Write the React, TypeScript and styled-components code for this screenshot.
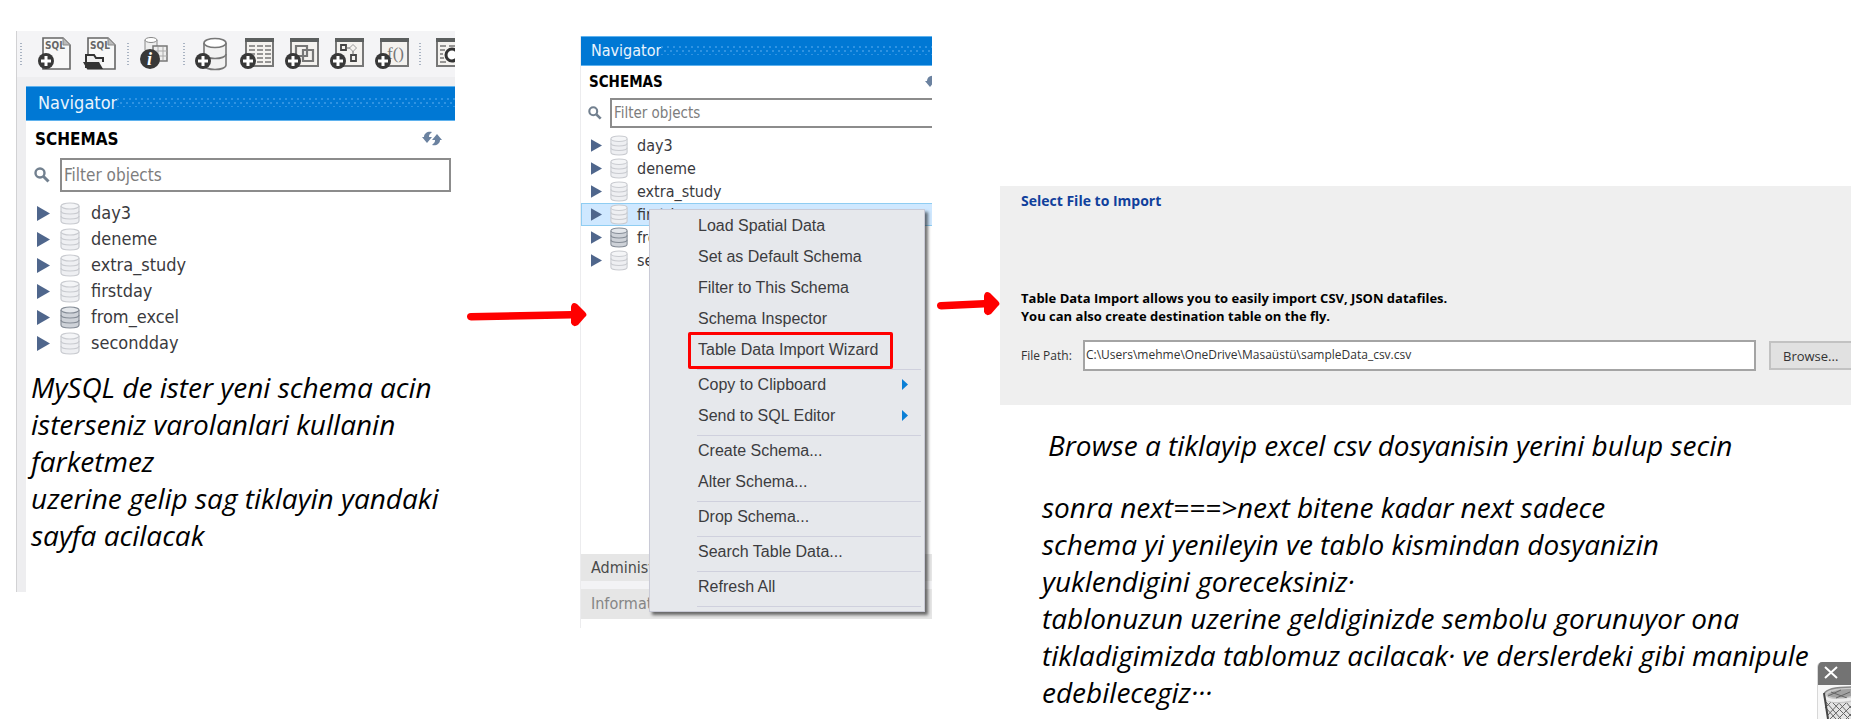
import React from "react";
import styled, { createGlobalStyle, css } from "styled-components";

const uiFont = `"DejaVu Sans Condensed", "Noto Sans", sans-serif`;

const GlobalStyle = createGlobalStyle`
  *, *::before, *::after { box-sizing: border-box; }
  body { margin: 0; background: #fff; color: #000; font-family: ${uiFont}; }
  button, input { font: inherit; color: inherit; border-radius: 0; }
  button { background: none; border: 0; padding: 0; margin: 0; text-align: left; }
  p, h1, h2, ul { margin: 0; padding: 0; }
  ul { list-style: none; }
  svg { display: block; flex: none; }
`;

/* ---------- board ---------- */

const Board = styled.main`
  position: relative;
  display: grid;
  grid-template-columns: 439px 125px 352px 68px minmax(600px, 1fr);
  align-items: start;
  min-height: 100vh;
  padding-left: 16px;
  overflow: hidden;
`;

const Step = styled.section<{ $top: number }>`
  min-width: 0;
  padding-top: ${(p) => p.$top}px;
`;

const ArrowCell = styled.div<{ $top: number; $left: number }>`
  position: relative;
  z-index: 2;
  padding: ${(p) => `${p.$top}px 0 0 ${p.$left}px`};
  svg { overflow: visible; }
`;

const Note = styled.p`
  font-family: "Open Sans", "Noto Sans", sans-serif;
  font-style: italic;
  font-size: 28px;
  line-height: 37px;
  font-variant-ligatures: none;
  white-space: nowrap;
`;

/* ---------- workbench panel ---------- */

const Workbench = styled.div`
  min-height: 561px;
  border-left: 1px solid #d2d2d4;
  background: linear-gradient(to right, #eeeef0 9px, #fff 9px);
`;

const Toolbar = styled.div`
  display: flex;
  align-items: center;
  height: 46px;
  padding-left: 3px;
  overflow: hidden;
  background: #f4f4f6;
`;

const ToolGroup = styled.div`
  display: flex;
  flex: none;
  gap: 11px;
`;

const ToolButton = styled.button`
  width: 34px;
  height: 36px;
`;

const ToolSeparator = styled.span<{ $lead?: boolean }>`
  flex: none;
  width: 2px;
  height: 22px;
  margin: ${(p) => (p.$lead ? "0 16px 0 0" : "0 10px")};
  background: repeating-linear-gradient(#a9b3c2 0 1px, #f4f4f6 1px 3px);
`;

const ToolbarEdge = styled.div`
  height: 9px;
  background: #eeeef0;
`;

const NavigatorPane = styled.div<{ $inset?: boolean }>`
  margin-left: ${(p) => (p.$inset ? 9 : 0)}px;
`;

const TitleBar = styled.h2<{ $small?: boolean }>`
  display: flex;
  align-items: center;
  height: ${(p) => (p.$small ? 30 : 35)}px;
  padding: 0 0 2px ${(p) => (p.$small ? 10 : 12)}px;
  background: #0078d4;
  border: solid #5fb2ee;
  border-width: 1px 0;
  color: #e9f4fd;
  font-size: ${(p) => (p.$small ? 16 : 18)}px;
  font-weight: normal;

  &::after {
    content: "";
    flex: 1;
    height: 9px;
    background-image:
      radial-gradient(circle at 1px 1px, #2f93e2 1px, transparent 1px),
      radial-gradient(circle at 4px 5px, #2f93e2 1px, transparent 1px);
    background-size: 6px 8px;
  }
`;

const SchemasHeader = styled.div<{ $small?: boolean }>`
  display: flex;
  align-items: center;
  justify-content: space-between;
  height: ${(p) => (p.$small ? 32 : 37)}px;
  padding: ${(p) => (p.$small ? "0 0 0 8px" : "0 13px 2px 9px")};
  overflow: hidden;
  font-size: ${(p) => (p.$small ? 15 : 17)}px;
  font-weight: bold;
`;

const RefreshButton = styled.button<{ $cut?: boolean }>`
  flex: none;
  margin-right: ${(p) => (p.$cut ? -13 : 0)}px;
`;

const FilterRow = styled.label<{ $small?: boolean }>`
  display: flex;
  align-items: center;
  gap: ${(p) => (p.$small ? 8 : 10)}px;
  padding: ${(p) => (p.$small ? "0 0 0 7px" : "0 4px 0 8px")};
`;

const FilterInput = styled.input<{ $small?: boolean }>`
  flex: 1;
  min-width: 0;
  height: ${(p) => (p.$small ? 30 : 34)}px;
  padding: 0 2px 1px;
  border: 2px solid #8c8c8c;
  border-right-width: ${(p) => (p.$small ? 0 : 2)}px;
  background: #fff;
  font-size: ${(p) => (p.$small ? 15 : 17)}px;
  &::placeholder { color: #7d7d7d; opacity: 1; }
`;

const Tree = styled.ul<{ $small?: boolean }>`
  padding-top: ${(p) => (p.$small ? 6 : 8)}px;
`;

const TreeRow = styled.button<{ $small?: boolean; $selected?: boolean }>`
  display: flex;
  align-items: center;
  width: 100%;
  height: ${(p) => (p.$small ? 23 : 26)}px;
  padding-left: ${(p) => (p.$small ? 9 : 10)}px;
  gap: ${(p) => (p.$small ? 8 : 10)}px;
  border: 1px solid transparent;
  border-right: 0;
  font-size: ${(p) => (p.$small ? 16 : 18)}px;
  color: #3a3a3e;
  ${(p) => p.$selected && css`background: #cfe8ff; border-color: #8fcdf2;`}
`;

const SchemaName = styled.span`
  padding: 0 0 1px 1px;
`;

const NoteBelow = styled.div`
  padding: 13px 0 0 14px;
`;

const SecondPane = styled.div`
  position: relative;
  display: flex;
  flex-direction: column;
  min-height: 592px;
  padding-bottom: 9px;
  border-left: 1px solid #ececee;
`;

const Spacer = styled.div`
  flex: 1;
`;

const BottomTabs = styled.div`
  display: grid;
  gap: 8px;
  background: #f3f3f5;
`;

const BottomTab = styled.button<{ $muted?: boolean }>`
  height: ${(p) => (p.$muted ? 30 : 27)}px;
  padding: 0 0 1px 10px;
  background: #e6e6e6;
  color: ${(p) => (p.$muted ? "#858585" : "#4a4a4a")};
  font-size: 16px;
`;

/* ---------- context menu ---------- */

const ContextMenu = styled.div`
  position: absolute;
  top: 173px;
  left: 68px;
  right: 7px;
  padding: 1px 0 4px;
  background: #e6e8ec;
  border: 1px solid #c9cad6;
  box-shadow: 3px 3px 3px rgba(0, 0, 0, 0.55);
  font-family: "Liberation Sans", Arial, sans-serif;
  font-size: 16px;
  color: #3c3c40;
`;

const MenuItem = styled.button`
  position: relative;
  display: flex;
  align-items: center;
  justify-content: space-between;
  width: 100%;
  height: 31px;
  padding: 0 16px 2px 48px;
`;

const MenuRule = styled.hr`
  height: 4px;
  margin: 0 3px 0 47px;
  border: solid #cfd0dd;
  border-width: 0 0 1px;
`;

const RedFrame = styled.span`
  position: absolute;
  inset: -3px 31px -3px 38px;
  border: 3px solid #f00;
  border-radius: 2px;
`;

/* ---------- import wizard ---------- */

const Wizard = styled.form`
  min-height: 219px;
  padding: 5px 0 34px 21px;
  overflow: hidden;
  background: #efefef;
  font-family: "Open Sans", "Noto Sans", sans-serif;
`;

const WizardTitle = styled.h1`
  font-size: 14px;
  line-height: 20px;
  color: #10409c;
`;

const WizardText = styled.p`
  margin-top: 78px;
  font-size: 13px;
  line-height: 18px;
  font-weight: bold;
`;

const FileRow = styled.div`
  display: flex;
  align-items: center;
  margin: 15px -10px 0 0;
  font-size: 12px;
  color: #333;
`;

const FileLabel = styled.label`
  width: 62px;
`;

const FileInput = styled.input`
  flex: 1;
  min-width: 0;
  height: 31px;
  padding: 0 1px 3px;
  border: 2px solid #a4a4a4;
  background: #fff;
`;

const BrowseButton = styled.button`
  width: 92px;
  height: 29px;
  margin-left: 13px;
  padding-left: 12px;
  border: 2px solid #c2c2c2;
  background: #e1e1e1;
  font-size: 13px;
`;

const WizardNotes = styled.div`
  display: grid;
  gap: 25px;
  padding: 22px 0 0 42px;
`;

const LeadNote = styled(Note)`
  padding-left: 6px;
`;

/* ---------- bin overlay ---------- */

const BinWidget = styled.aside`
  position: absolute;
  right: 0;
  bottom: 0;
  width: 34px;
  height: 57px;
  overflow: hidden;
  background: #f8f8f8;
  border-left: 1px solid #d8d8d8;
  border-top-left-radius: 5px;
`;

const BinClose = styled.button`
  display: block;
  width: 100%;
  height: 23px;
  padding: 0 0 2px 6px;
  background: #737373;
`;

/* ---------- drawings ---------- */

const Plus = () => (
  <g>
    <circle cx="8" cy="25" r="8" fill="#383838" />
    <path d="M8 20v10M3 25h10" stroke="#fff" strokeWidth="3" />
  </g>
);

const Glyph = ({ children }: { children: React.ReactNode }) => (
  <svg width="34" height="36" viewBox="0 0 34 36" fill="none">{children}</svg>
);

const Page = () => (
  <g>
    <path d="M5 2h20l7 7v24H5z" fill="#f8f8f8" stroke="#666" strokeWidth="1.6" />
    <path d="M25 2v7h7" fill="#bbb" stroke="#888" />
    <text x="7" y="13" fontSize="10" fontWeight="bold" fill="#666" fontFamily="DejaVu Sans Condensed">SQL</text>
  </g>
);

const Frame = () => (
  <g>
    <path d="M6 3h27v27H6z" fill="#f4f2ef" stroke="#777" strokeWidth="2" />
    <path d="M5 4h29" stroke="#5c5f5f" strokeWidth="4" />
  </g>
);

const NewSqlIcon = () => <Glyph><Page /><Plus /></Glyph>;

const OpenSqlIcon = () => (
  <Glyph>
    <Page />
    <path d="M3 32V19h8l2 3h7v4" fill="#eee" stroke="#333" strokeWidth="2" />
    <path d="M0 26h16l4 7H4z" fill="#333" />
  </Glyph>
);

const InfoIcon = () => (
  <Glyph>
    <path d="M6 4v10c0 3 12 3 12 0V4" fill="#eee" stroke="#888" />
    <ellipse cx="12" cy="4" rx="6" ry="2.5" fill="#fff" stroke="#888" />
    <path d="M14 10h14v15H14z" fill="#eee" stroke="#777" strokeWidth="1.5" />
    <path d="M15 15h13M15 20h13M19 11v13M24 11v13" stroke="#aaa" />
    <circle cx="11" cy="23" r="10" fill="#383838" />
    <text x="8" y="29" fontSize="18" fontWeight="bold" fontStyle="italic" fill="#fff" fontFamily="Liberation Serif">i</text>
  </Glyph>
);

const NewSchemaIcon = () => (
  <Glyph>
    <path d="M9 7v22c0 6 22 6 22 0V7" fill="#f2f2f2" stroke="#777" strokeWidth="1.6" />
    <path d="M9 18c0 6 22 6 22 0" stroke="#777" strokeWidth="1.6" />
    <ellipse cx="20" cy="7" rx="11" ry="4.5" fill="#fff" stroke="#777" strokeWidth="1.6" />
    <Plus />
  </Glyph>
);

const NewTableIcon = () => (
  <Glyph>
    <Frame />
    <path d="M9 10h6M17 10h6M25 10h6M9 14h6M17 14h6M25 14h6M9 18h6M17 18h6M25 18h6M17 22h6M25 22h6M17 26h6M25 26h6" stroke="#777" strokeWidth="1.6" />
    <Plus />
  </Glyph>
);

const NewViewIcon = () => (
  <Glyph>
    <Frame />
    <path d="M11 10h11v10H11zM18 14h10v11H18z" stroke="#777" strokeWidth="2.2" />
    <Plus />
  </Glyph>
);

const NewRoutineIcon = () => (
  <Glyph>
    <Frame />
    <path d="M11 9h5v5h-5zM21 19h5v6h-5z" stroke="#444" strokeWidth="1.8" />
    <path d="M16 12h4M23 15v4" stroke="#666" />
    <path d="M23 8.5l3.5 3.5-3.5 3.5-3.5-3.5z" stroke="#999" />
    <Plus />
  </Glyph>
);

const NewFunctionIcon = () => (
  <Glyph>
    <Frame />
    <text x="12" y="23" fontSize="17" fill="#777" fontFamily="Liberation Serif">f()</text>
    <Plus />
  </Glyph>
);

const SearchTableIcon = () => (
  <Glyph>
    <Frame />
    <path d="M5 10h6M5 14h5M5 18h3M5 22h4M5 26h6M14 10h6" transform="translate(4 0)" stroke="#777" strokeWidth="1.6" />
    <circle cx="21" cy="19" r="6" fill="#fff" stroke="#333" strokeWidth="3" />
  </Glyph>
);

const DbIcon = ({ size, dark }: { size: number; dark?: boolean }) => {
  const line = dark ? "#868d97" : "#c9cbd0";
  return (
    <svg width={size} height={size + 3} viewBox="0 0 20 23" fill="none" stroke={line} strokeWidth="1.2">
      <path d="M1 4v15c0 4 18 4 18 0V4" fill={dark ? "#ced2d8" : "#eeeff2"} />
      <path d="M1 9c0 4 18 4 18 0M1 14c0 4 18 4 18 0" />
      <ellipse cx="10" cy="4" rx="9" ry="3" fill={dark ? "#e4e7eb" : "#f4f5f7"} />
    </svg>
  );
};

const Expander = ({ size }: { size: number }) => (
  <svg width={size} height={size + 2} viewBox="0 0 13 15"><path d="M0 0l13 7.500L0 15z" fill="#4f668c" /></svg>
);

const Magnifier = ({ size }: { size: number }) => (
  <svg width={size} height={size} viewBox="0 0 16 16" fill="none" stroke="#72808f">
    <circle cx="6" cy="6" r="4.5" strokeWidth="2.4" />
    <path d="M9.500 9.500l5 5" strokeWidth="3" />
  </svg>
);

const RefreshGlyph = () => (
  <svg width="20" height="15" viewBox="0 0 20 15" fill="#6b82a0">
    <path d="M0 6h2c0-4 4-6 8-5L8 3c-1 1-1 2-1 3h3l-5 6z" />
    <path d="M20 9h-2c0 4-4 6-8 5l2-2c1-1 1-2 1-3h-3l5-6z" />
  </svg>
);

const RedArrow = ({ length }: { length: number }) => (
  <svg width={length} height="24" viewBox={`0 0 ${length} 24`} fill="#f00">
    <path d={`M4 10L${length - 15} 8V4q1-6 6-3l8 8q3 3 0 5l-7 8q-5 3-7-2v-4.500L4 17.500q-4-.5-4-4T4 10z`} />
  </svg>
);

const WireBin = () => (
  <svg width="33" height="34" viewBox="0 0 33 34" fill="none">
    <path d="M6 8l4 26h23V4z" fill="#e4e4e4" />
    <path d="M8 17l15 17M7 22l11 12M14 17l17 17M21 18l12 13M28 17l5 6M10 30l12-13M12 34l17-17M20 34l13-13M28 34l5-5M8 22l5-5" stroke="#666" />
    <path d="M6 9C8 4 20 2 33 2v15C20 20 9 18 7 14z" fill="#c9c9c9" />
    <path d="M9 10c5-5 15-6 24-6v7c-9 2-17 3-24-1z" fill="#a2a2a2" />
    <path d="M10 11l13-6M18 13l14-6M13 7l16 6" stroke="#666" />
    <path d="M6 9c0 7 12 8 27 5" stroke="#eee" strokeWidth="3" />
    <path d="M6 9C8 4 20 2 33 2" stroke="#888" strokeWidth="1.5" />
    <path d="M6 8l4 26" stroke="#444" strokeWidth="2" />
  </svg>
);

/* ---------- composition ---------- */

const schemas = ["day3", "deneme", "extra_study", "firstday", "from_excel", "secondday"];

function Navigator({ small, selected }: { small?: boolean; selected?: string }) {
  return (
    <NavigatorPane $inset={!small}>
      <TitleBar $small={small}>Navigator</TitleBar>
      <SchemasHeader $small={small}>
        SCHEMAS
        <RefreshButton $cut={small} aria-label="Refresh schemas"><RefreshGlyph /></RefreshButton>
      </SchemasHeader>
      <FilterRow $small={small}>
        <Magnifier size={small ? 14 : 16} />
        <FilterInput $small={small} placeholder="Filter objects" aria-label="Filter objects" />
      </FilterRow>
      <Tree $small={small}>
        {schemas.map((name) => (
          <li key={name}>
            <TreeRow $small={small} $selected={name === selected}>
              <Expander size={small ? 11 : 13} />
              <DbIcon size={small ? 18 : 20} dark={name === "from_excel"} />
              <SchemaName>{name}</SchemaName>
            </TreeRow>
          </li>
        ))}
      </Tree>
    </NavigatorPane>
  );
}

const menuGroups = [
  ["Load Spatial Data", "Set as Default Schema", "Filter to This Schema", "Schema Inspector", "Table Data Import Wizard"],
  ["Copy to Clipboard", "Send to SQL Editor"],
  ["Create Schema...", "Alter Schema..."],
  ["Drop Schema..."],
  ["Search Table Data..."],
  ["Refresh All"],
];
const withSubmenu = ["Copy to Clipboard", "Send to SQL Editor"];

const creators: [string, React.FC][] = [
  ["New schema", NewSchemaIcon],
  ["New table", NewTableIcon],
  ["New view", NewViewIcon],
  ["New procedure", NewRoutineIcon],
  ["New function", NewFunctionIcon],
];

export default function App() {
  return (
    <Board>
      <GlobalStyle />
      <Step $top={31}>
        <Workbench>
          <Toolbar>
            <ToolSeparator $lead />
            <ToolGroup>
              <ToolButton aria-label="New SQL tab"><NewSqlIcon /></ToolButton>
              <ToolButton aria-label="Open SQL script"><OpenSqlIcon /></ToolButton>
            </ToolGroup>
            <ToolSeparator />
            <ToolGroup>
              <ToolButton aria-label="Inspector"><InfoIcon /></ToolButton>
            </ToolGroup>
            <ToolSeparator />
            <ToolGroup>
              {creators.map(([label, Icon]) => (
                <ToolButton key={label} aria-label={label}><Icon /></ToolButton>
              ))}
            </ToolGroup>
            <ToolSeparator />
            <ToolGroup>
              <ToolButton aria-label="Search table data"><SearchTableIcon /></ToolButton>
            </ToolGroup>
          </Toolbar>
          <ToolbarEdge />
          <Navigator />
          <NoteBelow>
            <Note>
              MySQL de ister yeni schema acin<br />
              isterseniz varolanlari kullanin<br />
              farketmez<br />
              uzerine gelip sag tiklayin yandaki<br />
              sayfa acilacak
            </Note>
          </NoteBelow>
        </Workbench>
      </Step>

      <ArrowCell $top={303} $left={12}><RedArrow length={119} /></ArrowCell>

      <Step $top={36}>
        <SecondPane>
          <Navigator small selected="firstday" />
          <Spacer />
          <BottomTabs>
            <BottomTab>Administration</BottomTab>
            <BottomTab $muted>Information</BottomTab>
          </BottomTabs>
          <ContextMenu role="menu">
            {menuGroups.map((group) => (
              <React.Fragment key={group[0]}>
                {group.map((label) => (
                  <MenuItem key={label} role="menuitem">
                    {label}
                    {withSubmenu.includes(label) && (
                      <svg width="6" height="11" viewBox="0 0 6 11"><path d="M0 0l6 5.500L0 11z" fill="#0a7fd6" /></svg>
                    )}
                    {label === "Table Data Import Wizard" && <RedFrame />}
                  </MenuItem>
                ))}
                <MenuRule />
              </React.Fragment>
            ))}
          </ContextMenu>
        </SecondPane>
      </Step>

      <ArrowCell $top={292} $left={5}><RedArrow length={62} /></ArrowCell>

      <Step $top={186}>
        <Wizard onSubmit={(e) => e.preventDefault()}>
          <WizardTitle>Select File to Import</WizardTitle>
          <WizardText>
            Table Data Import allows you to easily import CSV, JSON datafiles.<br />
            You can also create destination table on the fly.
          </WizardText>
          <FileRow>
            <FileLabel htmlFor="file-path">File Path:</FileLabel>
            <FileInput id="file-path" defaultValue={"C:\\Users\\mehme\\OneDrive\\Masaüstü\\sampleData_csv.csv"} />
            <BrowseButton type="button">Browse...</BrowseButton>
          </FileRow>
        </Wizard>
        <WizardNotes>
          <LeadNote>Browse a tiklayip excel csv dosyanisin yerini bulup secin</LeadNote>
          <Note>
            sonra next===&gt;next bitene kadar next sadece<br />
            schema yi yenileyin ve tablo kismindan dosyanizin<br />
            yuklendigini goreceksiniz·<br />
            tablonuzun uzerine geldiginizde sembolu gorunuyor ona<br />
            tikladigimizda tablomuz acilacak· ve derslerdeki gibi manipule<br />
            edebilecegiz···
          </Note>
        </WizardNotes>
      </Step>

      <BinWidget>
        <BinClose aria-label="Close">
          <svg width="14" height="13" viewBox="0 0 14 13"><path d="M1 1l12 11M13 1L1 12" stroke="#fff" strokeWidth="2" /></svg>
        </BinClose>
        <WireBin />
      </BinWidget>
    </Board>
  );
}
